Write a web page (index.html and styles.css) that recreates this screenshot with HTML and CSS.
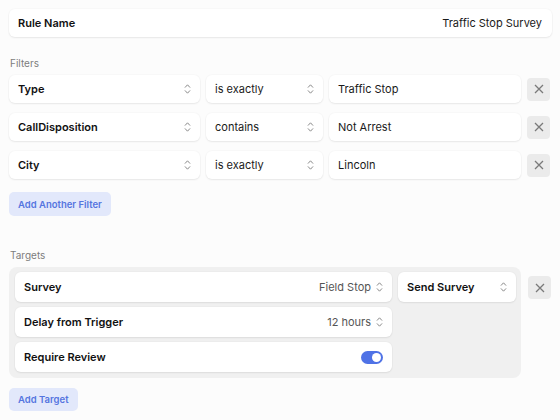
FILE: index.html
```html
<!DOCTYPE html>
<html>
<head>
<meta charset="utf-8">
<link rel="stylesheet" href="styles.css">
</head>
<body>
<div class="page">
  <div class="card rule">
    <span class="label">Rule Name</span>
    <span class="value">Traffic Stop Survey</span>
  </div>

  <div class="section-label filters-label">Filters</div>
  <div class="filters">
    <div class="card select"><span class="label">Type</span><svg class="chev" viewBox="0 0 7 12"><path d="M1.2 4.3 L3.5 1.8 L5.8 4.3 M1.2 7.7 L3.5 10.2 L5.8 7.7"/></svg></div>
    <div class="card select"><span class="value">is exactly</span><svg class="chev" viewBox="0 0 7 12"><path d="M1.2 4.3 L3.5 1.8 L5.8 4.3 M1.2 7.7 L3.5 10.2 L5.8 7.7"/></svg></div>
    <div class="card input"><span class="value">Traffic Stop</span></div>
    <button class="remove"><svg viewBox="0 0 10 10"><path d="M1 1 L9 9 M9 1 L1 9"/></svg></button>

    <div class="card select"><span class="label">CallDisposition</span><svg class="chev" viewBox="0 0 7 12"><path d="M1.2 4.3 L3.5 1.8 L5.8 4.3 M1.2 7.7 L3.5 10.2 L5.8 7.7"/></svg></div>
    <div class="card select"><span class="value">contains</span><svg class="chev" viewBox="0 0 7 12"><path d="M1.2 4.3 L3.5 1.8 L5.8 4.3 M1.2 7.7 L3.5 10.2 L5.8 7.7"/></svg></div>
    <div class="card input"><span class="value">Not Arrest</span></div>
    <button class="remove"><svg viewBox="0 0 10 10"><path d="M1 1 L9 9 M9 1 L1 9"/></svg></button>

    <div class="card select"><span class="label">City</span><svg class="chev" viewBox="0 0 7 12"><path d="M1.2 4.3 L3.5 1.8 L5.8 4.3 M1.2 7.7 L3.5 10.2 L5.8 7.7"/></svg></div>
    <div class="card select"><span class="value">is exactly</span><svg class="chev" viewBox="0 0 7 12"><path d="M1.2 4.3 L3.5 1.8 L5.8 4.3 M1.2 7.7 L3.5 10.2 L5.8 7.7"/></svg></div>
    <div class="card input"><span class="value">Lincoln</span></div>
    <button class="remove"><svg viewBox="0 0 10 10"><path d="M1 1 L9 9 M9 1 L1 9"/></svg></button>
  </div>
  <button class="add add-filter">Add Another Filter</button>

  <div class="section-label targets-label">Targets</div>
  <div class="targets-row">
    <div class="target">
      <div class="target-main">
        <div class="card trow"><span class="label">Survey</span><span class="right"><span class="muted">Field Stop</span><svg class="chev" viewBox="0 0 7 12"><path d="M1.2 4.3 L3.5 1.8 L5.8 4.3 M1.2 7.7 L3.5 10.2 L5.8 7.7"/></svg></span></div>
        <div class="card trow"><span class="label">Delay from Trigger</span><span class="right"><span class="muted">12 hours</span><svg class="chev" viewBox="0 0 7 12"><path d="M1.2 4.3 L3.5 1.8 L5.8 4.3 M1.2 7.7 L3.5 10.2 L5.8 7.7"/></svg></span></div>
        <div class="card trow"><span class="label">Require Review</span><span class="toggle"><span class="knob"></span></span></div>
      </div>
      <div class="target-side">
        <div class="card trow"><span class="label">Send Survey</span><svg class="chev" viewBox="0 0 7 12"><path d="M1.2 4.3 L3.5 1.8 L5.8 4.3 M1.2 7.7 L3.5 10.2 L5.8 7.7"/></svg></div>
      </div>
    </div>
    <button class="remove target-remove"><svg viewBox="0 0 10 10"><path d="M1 1 L9 9 M9 1 L1 9"/></svg></button>
  </div>
  <button class="add add-target">Add Target</button>
</div>
</body>
</html>
```
FILE: styles.css
```css
* { box-sizing: border-box; }
html, body { margin: 0; padding: 0; }
body {
  background: #fcfcfc;
  font-family: Inter, "Noto Sans", "Liberation Sans", sans-serif;
  font-size: 11px;
  color: #151515;
}
.page {
  padding: 9px 8px 0 9px;
  display: flex;
  flex-direction: column;
  align-items: flex-start;
}
.card {
  background: #ffffff;
  border-radius: 6px;
  box-shadow: 0 1px 2px rgba(0, 0, 0, 0.07), 0 0 0 1px rgba(0, 0, 0, 0.015);
  display: flex;
  align-items: center;
  padding: 0 9px;
}
.label { font-weight: 600; color: #111; }
.value { color: #1a1a1a; }
.muted { color: #555; }
.rule {
  width: 543px;
  height: 28px;
  justify-content: space-between;
  padding-right: 10px;
}
.section-label {
  font-size: 10px;
  line-height: 12px;
  color: #7c7c7c;
  margin-left: 1px;
  margin-bottom: 6px;
}
.filters-label { margin-top: 20px; }
.targets-label { margin-top: 33px; }
.filters {
  display: grid;
  grid-template-columns: 191px 117px 192px 23px;
  column-gap: 6px;
  row-gap: 10px;
  align-items: center;
}
.filters .card { height: 28px; }
.select { justify-content: space-between; }
.chev {
  width: 7px;
  height: 12px;
  fill: none;
  stroke: #8a8a8a;
  stroke-width: 1;
  stroke-linecap: round;
  stroke-linejoin: round;
  flex: none;
}
.remove {
  width: 23px;
  height: 23px;
  border: none;
  border-radius: 4px;
  background: #ebebeb;
  padding: 0;
  display: flex;
  align-items: center;
  justify-content: center;
}
.remove svg {
  width: 10px;
  height: 10px;
  fill: none;
  stroke: #7a7a7a;
  stroke-width: 1.3;
}
.add {
  border: none;
  border-radius: 5px;
  background: #e2e8fb;
  color: #5575e0;
  font-family: inherit;
  font-size: 9.5px;
  font-weight: 600;
  height: 24px;
  padding: 0 9px;
}
.add-filter { margin-top: 13px; }
.add-target { margin-top: 10px; height: 23px; }
.targets-row {
  display: flex;
  align-items: flex-start;
  gap: 7px;
}
.target {
  width: 512px;
  background: #f0f0f0;
  border-radius: 8px;
  padding: 5px 5px 6px 6px;
  display: flex;
  gap: 6px;
  align-items: flex-start;
}
.target-main {
  width: 377px;
  display: flex;
  flex-direction: column;
  gap: 5px;
}
.target-side { width: 118px; }
.trow {
  height: 30px;
  justify-content: space-between;
}
.right {
  display: flex;
  align-items: center;
  gap: 5px;
}
.target-remove { margin-top: 9px; }
.toggle {
  width: 22px;
  height: 13px;
  border-radius: 7px;
  background: #4f72e6;
  display: flex;
  align-items: center;
  justify-content: flex-end;
  padding-right: 2px;
}
.knob {
  width: 9px;
  height: 9px;
  border-radius: 50%;
  background: #ffffff;
}
```
